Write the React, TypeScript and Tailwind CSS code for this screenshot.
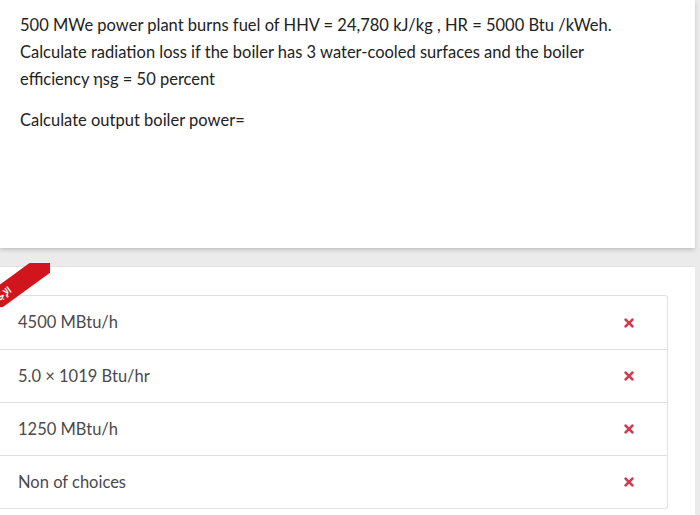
import React from "react";
import { FaTimes } from "react-icons/fa";

const choices = ["4500 MBtu/h", "5.0 × 1019 Btu/hr", "1250 MBtu/h", "Non of choices"];

export default function App() {
  return (
    <div className="w-[700px] h-[515px] overflow-hidden bg-[#ebebeb] font-['Lato',sans-serif]">
      {/* question card */}
      <div className="w-[695px] h-[248px] bg-white shadow-[0_2px_4px_rgba(0,0,0,0.18)] pl-[20px] pt-[12px] text-[16.5px] leading-[27px] text-[#222]">
        <p>
          500 MWe power plant burns fuel of HHV = 24,780 kJ/kg , HR = 5000 Btu /kWeh.
          <br />
          Calculate radiation loss if the boiler has 3 water-cooled surfaces and the boiler
          <br />
          efficiency ηsg = 50 percent
        </p>
        <p className="mt-[14px]">Calculate output boiler power=</p>
      </div>

      {/* answers card */}
      <div className="relative mt-[18px] w-[695px] h-[260px] bg-white border-t border-[#e2e2e2] pt-[28px]">
        <div className="absolute left-[38px] top-[-4px] w-[8px] h-[6px] bg-[#8a0c10] [clip-path:polygon(0_0,100%_100%,0_100%)]" />
        <div className="absolute left-0 top-[-4px] w-[50px] h-[44px] overflow-hidden">
          <div className="absolute left-[-26px] top-[10px] w-[90px] h-[20px] bg-[#d0161c] -rotate-[36deg] text-white text-[9px] leading-[20px] pl-[10px] font-bold">
            الإجابة
          </div>
        </div>
        <div className="w-[668px] border border-l-0 border-[#e2e2e2] rounded-r-[3px] bg-white">
          {choices.map((c, i) => (
            <div
              key={c}
              className={`flex items-center justify-between h-[53px] pl-[18px] pr-[31px] text-[16.5px] text-[#4a4a4a] ${
                i > 0 ? "border-t border-[#e2e2e2]" : ""
              }`}
            >
              <span>{c}</span>
              <FaTimes className="text-[#d23a4e] w-[14px] h-[14px]" />
            </div>
          ))}
        </div>
      </div>
    </div>
  );
}
